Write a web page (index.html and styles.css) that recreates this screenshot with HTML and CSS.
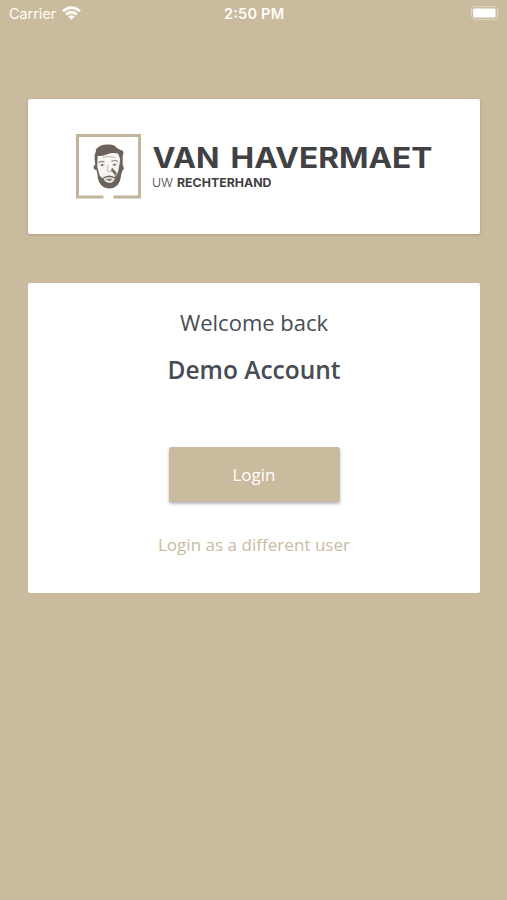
FILE: index.html
```html
<!DOCTYPE html>
<html lang="en">
<head>
<meta charset="utf-8">
<title>Van Havermaet</title>
<link rel="stylesheet" href="styles.css">
</head>
<body>
<header class="status">
  <div class="network">
    <svg class="carrier" width="48" height="20"><text x="1" y="14" textLength="47">Carrier</text></svg>
    <svg class="wifi" width="19" height="14" viewBox="0 0 19 14" fill="none" stroke="currentColor" stroke-width="2.700"><path d="M1 5.300Q9.500-2 18 5.300M4 8.500Q9.500 4 15 8.500"/><path d="M6.200 10.500Q9.500 7.800 12.800 10.500L9.500 13.800Z" fill="currentColor" stroke="none"/></svg>
  </div>
  <svg class="time" width="62" height="20"><text x="0" y="14" textLength="60">2:50 PM</text></svg>
  <svg class="battery" width="32" height="16" viewBox="0 0 32 16"><rect x="1.500" y="1.500" width="26" height="13" rx="3.500" fill="none" stroke="#ded3bf"/><rect x="3" y="3.500" width="22.500" height="9" rx="1.500" fill="#fff"/><path d="M28.500 6q2 2 0 4z" fill="#ded3bf"/></svg>
</header>
<main class="content">
  <section class="card brand">
    <svg width="358" height="68" viewBox="75 133 358 68" role="img" aria-label="Van Havermaet">
      <path d="M103.500 197H77.500V135.500H139.500V197H113.500" fill="none" stroke="#c2b59c" stroke-width="3"/>
      <g>
        <path d="M95 162Q92.500 164 94 168Q95 171 97 170L99 181Q103 188.500 109 188.500Q116 188 119 181L121 170Q123.500 171 124 166Q125 162 122 161L123 153L121 150H98Z" fill="#f7f6f3"/>
        <path d="M95.300 164C94.500 158 94 155 96 151.500Q95 149.500 97 148.200Q101 144.500 107 144.600Q114 144 117 148Q120 150 122.800 150.700Q124.400 153 122.800 155.500L122.600 165L124 168.500Q121.500 171 121.100 175C120.500 184 115.500 188.500 109.500 188.500C102 188.500 98 183 97.500 175L96.500 170Q93.500 170 93.500 166.500L95 165ZM97.600 155.700L97.300 167L99.500 175Q102 180 104 177Q109 174 114.500 177Q118 175 119 167L120.200 160Q119.500 156.500 118 153.500Q112 152.500 108 154Q102 156.500 97.600 155.700Z" fill="#6b635b" fill-rule="evenodd"/>
        <path d="M98.500 162.500Q101 160.500 104.500 162M111.500 161.500Q115 159.500 118 161.500" fill="none" stroke="#8c857d" stroke-width="1.100"/>
        <path d="M99.500 165.200Q102 163 104.500 165.200M112 164.800Q114.500 162.800 117 164.500M108 165L107 170.500Q109 173 112 171M102.500 157.500Q108 155.500 115.500 157.500" fill="none" stroke="#a7a19b" stroke-width=".7"/>
        <circle cx="102.200" cy="165.200" r="1" fill="#5d5650"/><circle cx="114.500" cy="164.900" r="1" fill="#5d5650"/>
        <path d="M112 167.500L111 170.500L115.500 176L117 173Z" fill="#776f67"/>
        <path d="M103.500 178.500Q109 175.500 115 178.500Q113 183 109.500 183Q105 182.500 103.500 178.500Z" fill="#efede9"/>
        <path d="M105 179Q109 177.800 113 179L109.500 181.500Z" fill="#8a827a"/>
      </g>
      <text class="brand-name" x="152.500" y="167.500" textLength="67" lengthAdjust="spacingAndGlyphs">VAN</text>
      <text class="brand-name" x="230.500" y="167.500" textLength="202" lengthAdjust="spacingAndGlyphs">HAVERMAET</text>
      <text class="tagline" x="152" y="187" textLength="21" lengthAdjust="spacingAndGlyphs">UW</text>
      <text class="tagline strong" x="177" y="187" textLength="94.500" lengthAdjust="spacingAndGlyphs">RECHTERHAND</text>
    </svg>
  </section>
  <section class="card account">
    <p class="welcome">Welcome back</p>
    <h1 class="name">Demo Account</h1>
    <button class="login" type="button">Login</button>
    <a class="switch">Login as a different user</a>
  </section>
</main>
</body>
</html>
```
FILE: styles.css
```css
* { box-sizing: border-box; }
body {
  margin: 0;
  min-height: 900px;
  background: #cabb9f;
  color: #474d54;
  font-family: "Open Sans", sans-serif;
}
.status {
  height: 28px;
  padding: 5px 5px 0 8px;
  display: grid;
  grid-template-columns: 1fr 62px 1fr;
  align-items: start;
  color: #fffdf8;
  font: 14.5px Inter, sans-serif;
}
.status text { fill: currentColor; }
.network { display: flex; }
.carrier, .time { display: block; }
.wifi { margin: 1px 0 0 6px; }
.time { font-weight: 600; }
.battery { justify-self: end; }
.content {
  padding: 71px 27px 0 28px;
  display: flex;
  flex-direction: column;
  gap: 49px;
}
.card {
  background: #fff;
  border-radius: 2px;
  display: flex;
}
.brand {
  height: 135px;
  padding: 34px 0 0 47px;
  box-shadow: 0 1px 3px rgba(80, 60, 30, .25);
}
.brand svg { display: block; }
.brand text { font-family: Inter, sans-serif; fill: #414042; }
.brand .brand-name { font-size: 29px; font-weight: 700; }
.brand .tagline { font-size: 11.5px; font-weight: 300; }
.brand .strong { font-weight: 700; }
.account {
  height: 310px;
  padding-top: 23px;
  flex-direction: column;
  align-items: center;
}
.welcome { margin: 0; font-size: 22px; line-height: 32px; }
.name { margin: 15px 0 0; font-size: 24.5px; line-height: 34px; font-weight: 600; }
.login {
  width: 171px;
  height: 55px;
  margin-top: 60px;
  padding: 0;
  border: 0;
  border-radius: 2px;
  background: #cabb9f;
  box-shadow: 0 2px 3px rgba(60, 60, 80, .35);
  color: #fff;
  font: 17px "Open Sans", sans-serif;
}
.switch {
  margin-top: 31px;
  color: #cabb9f;
  font-size: 17px;
  line-height: 24px;
  letter-spacing: .03px;
}
```
